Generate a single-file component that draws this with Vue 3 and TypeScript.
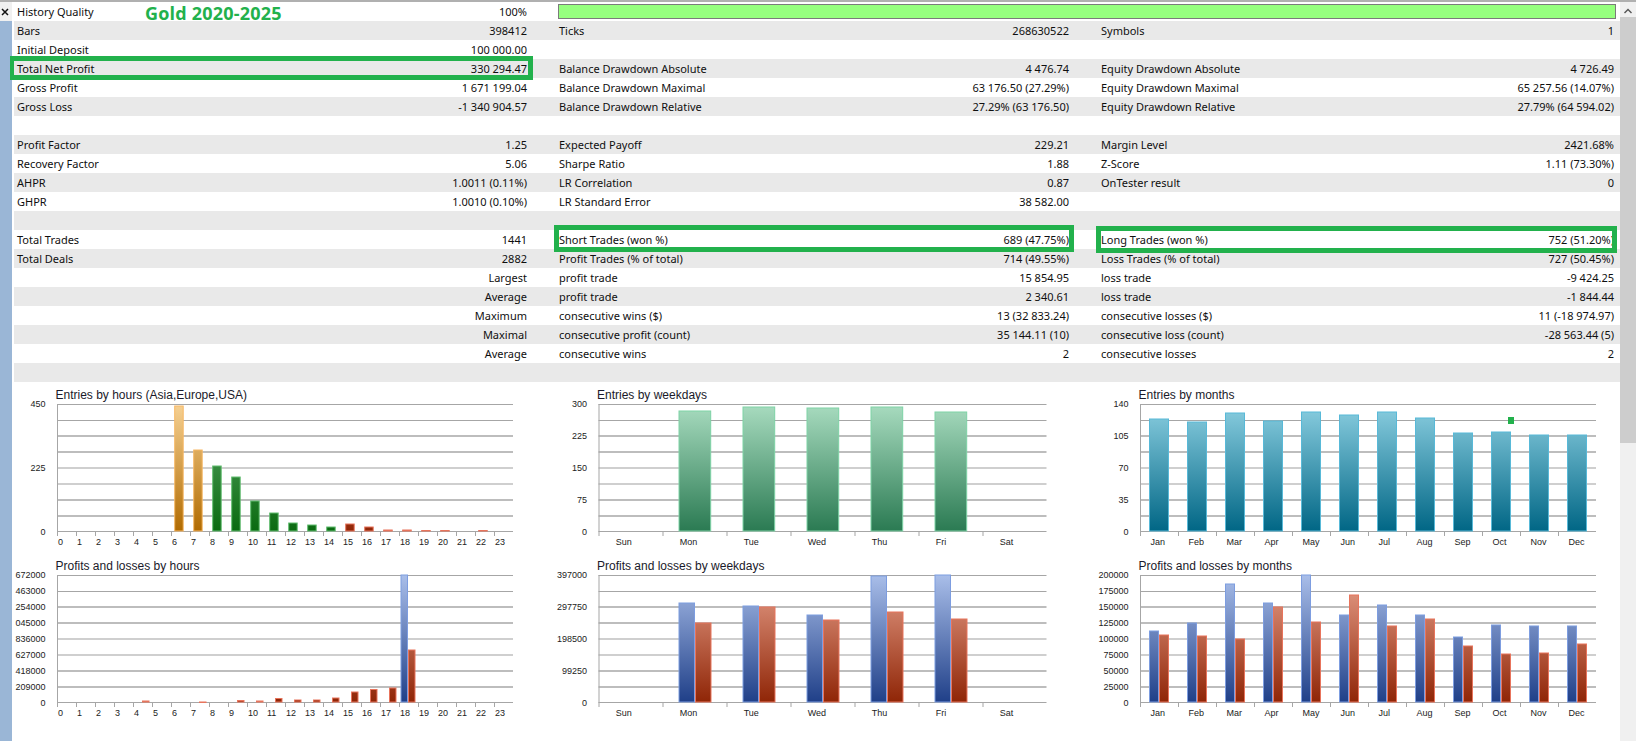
<script setup lang="ts">
interface Cell { label: string; value: string; box?: 'net' | 'short' | 'long'; }
type Row = Cell[];

const c = (label = '', value = '', box?: Cell['box']): Cell => ({ label, value, box });

const rows: Row[] = [
  [c('History Quality', '100%')],
  [c('Bars', '398412'), c('Ticks', '268630522'), c('Symbols', '1')],
  [c('Initial Deposit', '100 000.00'), c(), c()],
  [c('Total Net Profit', '330 294.47', 'net'), c('Balance Drawdown Absolute', '4 476.74'), c('Equity Drawdown Absolute', '4 726.49')],
  [c('Gross Profit', '1 671 199.04'), c('Balance Drawdown Maximal', '63 176.50 (27.29%)'), c('Equity Drawdown Maximal', '65 257.56 (14.07%)')],
  [c('Gross Loss', '-1 340 904.57'), c('Balance Drawdown Relative', '27.29% (63 176.50)'), c('Equity Drawdown Relative', '27.79% (64 594.02)')],
  [c(), c(), c()],
  [c('Profit Factor', '1.25'), c('Expected Payoff', '229.21'), c('Margin Level', '2421.68%')],
  [c('Recovery Factor', '5.06'), c('Sharpe Ratio', '1.88'), c('Z-Score', '1.11 (73.30%)')],
  [c('AHPR', '1.0011 (0.11%)'), c('LR Correlation', '0.87'), c('OnTester result', '0')],
  [c('GHPR', '1.0010 (0.10%)'), c('LR Standard Error', '38 582.00'), c()],
  [c(), c(), c()],
  [c('Total Trades', '1441'), c('Short Trades (won %)', '689 (47.75%)', 'short'), c('Long Trades (won %)', '752 (51.20%)', 'long')],
  [c('Total Deals', '2882'), c('Profit Trades (% of total)', '714 (49.55%)'), c('Loss Trades (% of total)', '727 (50.45%)')],
  [c('', 'Largest'), c('profit trade', '15 854.95'), c('loss trade', '-9 424.25')],
  [c('', 'Average'), c('profit trade', '2 340.61'), c('loss trade', '-1 844.44')],
  [c('', 'Maximum'), c('consecutive wins ($)', '13 (32 833.24)'), c('consecutive losses ($)', '11 (-18 974.97)')],
  [c('', 'Maximal'), c('consecutive profit (count)', '35 144.11 (10)'), c('consecutive loss (count)', '-28 563.44 (5)')],
  [c('', 'Average'), c('consecutive wins', '2'), c('consecutive losses', '2')],
  [c(), c(), c()],
];

type Grad = 'orange' | 'green' | 'red' | 'blue' | 'mint' | 'teal';
const palette: Record<Grad, { top: string; bottom: string; stroke: string }> = {
  orange: { top: '#f6d193', bottom: '#b06a00', stroke: '#f7b865' },
  green: { top: '#5fa96b', bottom: '#0a6a10', stroke: '#62bd70' },
  red: { top: '#e8a18c', bottom: '#8f2506', stroke: '#e8745c' },
  blue: { top: '#a9bee9', bottom: '#1f3f88', stroke: '#7d9de0' },
  mint: { top: '#a9dcc0', bottom: '#2a7a52', stroke: '#7ed3a6' },
  teal: { top: '#8ccfe1', bottom: '#006685', stroke: '#58b9d8' },
};

interface Series { grad: Grad; slot: number; heights: Record<number, number>; }
interface Chart {
  title: string;
  plotX: number;
  cats: string[];
  catW: number;
  labelOffset: number;
  barInset: number;
  barW: number;
  yLabels: string[];
  series: Series[];
  marker?: boolean;
}

const hours = Array.from({ length: 24 }, (_, i) => String(i));
const days = ['Sun', 'Mon', 'Tue', 'Wed', 'Thu', 'Fri', 'Sat'];
const months = ['Jan', 'Feb', 'Mar', 'Apr', 'May', 'Jun', 'Jul', 'Aug', 'Sep', 'Oct', 'Nov', 'Dec'];
const list = (values: number[], from = 0): Record<number, number> =>
  Object.fromEntries(values.map((v, i) => [i + from, v]));

const charts: Chart[] = [
  {
    title: 'Entries by hours (Asia,Europe,USA)', plotX: 43, cats: hours, catW: 19, labelOffset: 1,
    barInset: 3.2, barW: 9.5,
    yLabels: ['450', '', '', '', '225', '', '', '', '0'],
    series: [
      { grad: 'orange', slot: 0, heights: list([126, 82], 6) },
      { grad: 'green', slot: 0, heights: list([66, 55, 31, 19, 9, 7, 5], 8) },
      { grad: 'red', slot: 0, heights: { 15: 8, 16: 5, 17: 2, 18: 2, 19: 1.5, 20: 1.5, 22: 1.5 } },
    ],
  },
  {
    title: 'Entries by weekdays', plotX: 43.5, cats: days, catW: 64, labelOffset: 17.2,
    barInset: 16, barW: 32.7,
    yLabels: ['300', '', '225', '', '150', '', '75', '', '0'],
    series: [{ grad: 'mint', slot: 0, heights: list([121, 125, 124, 125, 120], 1) }],
  },
  {
    title: 'Entries by months', plotX: 43, cats: months, catW: 38, labelOffset: 10.5,
    barInset: 9, barW: 20, marker: true,
    yLabels: ['140', '', '105', '', '70', '', '35', '', '0'],
    series: [{ grad: 'teal', slot: 0, heights: list([113, 110, 119, 111, 120, 117, 120, 114, 99, 100, 97, 97]) }],
  },
  {
    title: 'Profits and losses by hours', plotX: 43, cats: hours, catW: 19, labelOffset: 1,
    barInset: 1.5, barW: 7.5,
    yLabels: ['672000', '463000', '254000', '045000', '836000', '627000', '418000', '209000', '0'],
    series: [
      { grad: 'blue', slot: 0, heights: { 18: 128 } },
      { grad: 'red', slot: 1, heights: { 4: 2, 7: 1, 9: 2.5, 10: 2, 11: 4.5, 12: 3, 13: 3, 14: 5, 15: 11, 16: 13.5, 17: 15, 18: 53 } },
    ],
  },
  {
    title: 'Profits and losses by weekdays', plotX: 43.5, cats: days, catW: 64, labelOffset: 17.2,
    barInset: 16, barW: 16.5,
    yLabels: ['397000', '', '297750', '', '198500', '', '99250', '', '0'],
    series: [
      { grad: 'blue', slot: 0, heights: list([100, 97, 88, 127, 128], 1) },
      { grad: 'red', slot: 1, heights: list([80, 96, 83, 91, 84], 1) },
    ],
  },
  {
    title: 'Profits and losses by months', plotX: 43, cats: months, catW: 38, labelOffset: 10.5,
    barInset: 9, barW: 10,
    yLabels: ['200000', '175000', '150000', '125000', '100000', '75000', '50000', '25000', '0'],
    series: [
      { grad: 'blue', slot: 0, heights: list([72, 80, 119, 100, 128, 88, 98, 88, 66, 78, 77, 77]) },
      { grad: 'red', slot: 1, heights: list([68, 67, 64, 96, 81, 108, 77, 84, 57, 49, 50, 59]) },
    ],
  },
];

const TOP = 22;
const BASE = 149.5;
const STEP = 15.93;
const lineColors = ['#a6a6a6', '#a6a6a6', '#bdbdbd', '#bdbdbd', '#cfcfcf', '#cfcfcf', '#bdbdbd', '#bdbdbd', '#a6a6a6'];
const lineSizes = [1, 1, 2, 2, 2, 2, 2, 2, 1];
const lineY = (n: number): number => Math.round(TOP + 0.3 + STEP * n - lineSizes[n] / 2);
const labelY = (n: number): number => TOP + 0.3 + STEP * n + 3;

const gradsOf = (chart: Chart): Grad[] => [...new Set(chart.series.map(s => s.grad))];
const gradId = (index: number, grad: Grad): string => `chart${index}-${grad}`;
const barsOf = (chart: Chart, index: number) =>
  chart.series.flatMap(s =>
    Object.entries(s.heights).map(([cat, h]) => ({
      key: `${s.grad}-${cat}`,
      x: chart.plotX + Number(cat) * chart.catW + chart.barInset + s.slot * chart.barW,
      y: BASE - h,
      w: chart.barW,
      h,
      fill: `url(#${gradId(index, s.grad)})`,
      stroke: palette[s.grad].stroke,
    })),
  );
</script>

<template>
  <div class="window">
    <div class="side">
      <div class="close">
        <svg width="8" height="8" viewBox="0 0 8 8"><path d="M1 1l6 6M7 1l-6 6" stroke="#111" stroke-width="1.5" fill="none" /></svg>
      </div>
    </div>

    <div class="main">
      <div v-for="(row, r) in rows" :key="r" class="row" :class="{ shaded: r % 2 === 1 }">
        <div v-for="(cell, k) in row" :key="k" class="cell">
          <span>{{ cell.label }}</span>
          <span>{{ cell.value }}</span>
          <span v-if="r === 0" class="heading">Gold 2020-2025</span>
          <span v-if="cell.box" class="box" :class="cell.box"></span>
        </div>
        <div v-if="r === 0" class="meter"></div>
      </div>

      <div class="charts">
        <svg v-for="(chart, i) in charts" :key="chart.title" class="chart" :class="{ tall: i > 2 }">
          <defs>
            <linearGradient
              v-for="g in gradsOf(chart)" :id="gradId(i, g)" :key="g"
              gradientUnits="userSpaceOnUse" x1="0" x2="0" :y1="TOP" :y2="BASE"
            >
              <stop offset="0" :stop-color="palette[g].top" />
              <stop offset="1" :stop-color="palette[g].bottom" />
            </linearGradient>
          </defs>

          <text class="title" :x="chart.plotX - 1.5" y="16.5">{{ chart.title }}</text>

          <rect
            v-for="(size, n) in lineSizes" :key="n"
            :x="chart.plotX" :y="lineY(n)" :width="chart.catW * chart.cats.length" :height="size" :fill="lineColors[n]"
          />
          <rect :x="chart.plotX" :y="TOP" width="1" :height="BASE - TOP" fill="#a6a6a6" />

          <template v-for="(cat, n) in chart.cats" :key="cat">
            <rect :x="chart.plotX + n * chart.catW" :y="BASE - 0.5" width="1" height="5" fill="#a6a6a6" />
            <text class="tick" :x="chart.plotX + n * chart.catW + chart.labelOffset" :y="BASE + 13.5">{{ cat }}</text>
          </template>

          <text
            v-for="(label, n) in chart.yLabels" :key="n"
            class="tick end" :x="chart.plotX - 11.5" :y="labelY(n)"
          >{{ label }}</text>

          <rect
            v-for="bar in barsOf(chart, i)" :key="bar.key"
            :x="bar.x + 0.5" :y="bar.y + 0.5" :width="bar.w - 1" :height="Math.max(bar.h - 1, 0.5)"
            :fill="bar.fill" :stroke="bar.stroke"
          />

          <rect v-if="chart.marker" x="411" y="35" width="6" height="7" fill="#22b14c" />
        </svg>
      </div>
    </div>

    <div class="scrollbar">
      <svg class="arrow" width="10" height="6" viewBox="0 0 10 6"><path d="M1.5 5L5 1.5 8.5 5" stroke="#555" stroke-width="1.4" fill="none" /></svg>
      <div class="thumb"></div>
    </div>
  </div>
</template>

<style>
html, body { margin: 0; overflow: hidden; background: #fff; }
</style>

<style scoped>
.window {
  display: flex;
  width: 1636px;
  height: 741px;
  box-sizing: border-box;
  border-top: 2px solid #b0b0b0;
  overflow: hidden;
  background: #fff;
  color: #0f0f0f;
  font-family: "Noto Sans", "Liberation Sans", sans-serif;
  font-size: 11px;
}
.side {
  flex: 0 0 12px;
  margin-right: 2px;
  background: #9ab6d6;
}
.close {
  display: flex;
  align-items: center;
  justify-content: center;
  width: 9px;
  height: 19px;
  padding-right: 3px;
  background: #f0f0f0;
}
.main { flex: 0 0 1606px; min-width: 0; }
.row {
  display: grid;
  grid-template-columns: 519px 520px 523px;
  column-gap: 22px;
  height: 19px;
  line-height: 19px;
  width: 1606px;
}
.shaded { background: #e9e9e9; }
.cell {
  position: relative;
  display: flex;
  justify-content: space-between;
  padding: 0 6px 0 3px;
  white-space: nowrap;
}
.cell:nth-child(n + 2) { padding-left: 4px; }
.heading {
  position: absolute;
  left: 131px;
  top: 0;
  color: #22b14c;
  font-family: "Open Sans", sans-serif;
  font-size: 18px;
  font-weight: 700;
  letter-spacing: 0.2px;
  line-height: 22px;
}
.box {
  position: absolute;
  box-sizing: border-box;
  border: 5px solid #22b14c;
}
.net { left: -4px; right: 0; top: -3px; bottom: -2px; border-width: 5px 5px 5px 4px; }
.short { left: -1px; right: 1px; top: -5px; bottom: -3px; }
.long { left: -1px; right: 3px; top: -4px; bottom: -4px; }
.meter {
  grid-column: 2 / 4;
  margin: 2px 4px 2px 3px;
  box-sizing: border-box;
  border: 1px solid #7b7b7b;
  background: #96ff7f;
}
.charts {
  display: grid;
  grid-template-columns: 519px 520px 523px;
  column-gap: 22px;
}
.chart { display: block; width: 100%; height: 171px; }
.chart.tall { height: 186px; }
.title {
  font-family: "Liberation Sans", Arial, sans-serif;
  font-size: 12px;
  fill: #1a1a2a;
}
.tick {
  font-family: "Liberation Sans", Arial, sans-serif;
  font-size: 9px;
  fill: #222;
}
.end { text-anchor: end; }
.scrollbar {
  flex: 0 0 16px;
  position: relative;
  background: #f0f0f0;
}
.arrow { display: block; margin: 6px auto 0; }
.thumb {
  margin-top: 3px;
  height: 426px;
  background: #cdcdcd;
}
</style>
